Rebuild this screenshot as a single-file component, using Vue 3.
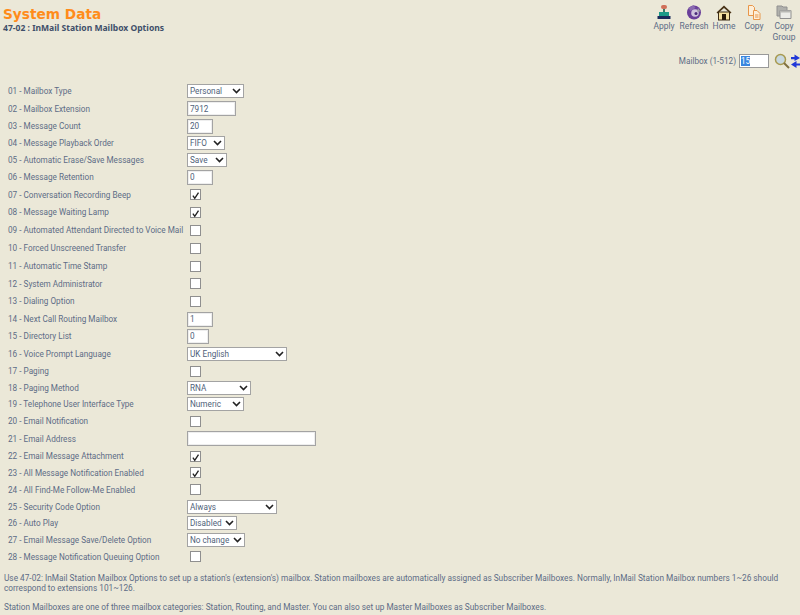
<script setup>
const rows = [
  { n: '01 - Mailbox Type', h: 17, t: 's', v: 'Personal', w: 57 },
  { n: '02 - Mailbox Extension', h: 17.5, t: 'i', v: '7912', w: 49 },
  { n: '03 - Message Count', h: 17.5, t: 'i', v: '20', w: 26 },
  { n: '04 - Message Playback Order', h: 17, t: 's', v: 'FIFO', w: 38 },
  { n: '05 - Automatic Erase/Save Messages', h: 17, t: 's', v: 'Save', w: 40 },
  { n: '06 - Message Retention', h: 17, t: 'i', v: '0', w: 26 },
  { n: '07 - Conversation Recording Beep', h: 17.5, t: 'c', v: true },
  { n: '08 - Message Waiting Lamp', h: 18, t: 'c', v: true },
  { n: '09 - Automated Attendant Directed to Voice Mail', h: 18, t: 'c' },
  { n: '10 - Forced Unscreened Transfer', h: 18, t: 'c' },
  { n: '11 - Automatic Time Stamp', h: 17.5, t: 'c' },
  { n: '12 - System Administrator', h: 17.5, t: 'c' },
  { n: '13 - Dialing Option', h: 18, t: 'c' },
  { n: '14 - Next Call Routing Mailbox', h: 17.5, t: 'i', v: '1', w: 26 },
  { n: '15 - Directory List', h: 17.25, t: 'i', v: '0', w: 22 },
  { n: '16 - Voice Prompt Language', h: 17.5, t: 's', v: 'UK English', w: 100 },
  { n: '17 - Paging', h: 17, t: 'c' },
  { n: '18 - Paging Method', h: 16.25, t: 's', v: 'RNA', w: 64 },
  { n: '19 - Telephone User Interface Type', h: 16.75, t: 's', v: 'Numeric', w: 57 },
  { n: '20 - Email Notification', h: 17.5, t: 'c' },
  { n: '21 - Email Address', h: 17.75, t: 'i', v: '', w: 129 },
  { n: '22 - Email Message Attachment', h: 16.75, t: 'c', v: true },
  { n: '23 - All Message Notification Enabled', h: 16.5, t: 'c', v: true },
  { n: '24 - All Find-Me Follow-Me Enabled', h: 17.5, t: 'c' },
  { n: '25 - Security Code Option', h: 16.75, t: 's', v: 'Always', w: 90 },
  { n: '26 - Auto Play', h: 16.25, t: 's', v: 'Disabled', w: 50 },
  { n: '27 - Email Message Save/Delete Option', h: 16.5, t: 's', v: 'No change', w: 58 },
  { n: '28 - Message Notification Queuing Option', h: 17, t: 'c' },
]
</script>

<template>
  <div class="page">
    <header class="top">
      <div>
        <h1 class="title">System Data</h1>
        <h2 class="sub">47-02 : InMail Station Mailbox Options</h2>
      </div>
      <nav class="tools">
        <div class="tool">
          <svg width="18" height="18" viewBox="0 0 18 18"><rect x="6" y="2" width="6" height="4" rx="2" fill="#d0705a"/><rect x="8" y="6" width="2" height="4" fill="#3a7a6a"/><rect x="4" y="9" width="10" height="4" fill="#1c9a88"/><rect x="2.500" y="13" width="13" height="3" fill="#1a2a5a"/></svg>
          <span>Apply</span>
        </div>
        <div class="tool">
          <svg width="18" height="18" viewBox="0 0 18 18"><circle cx="9" cy="9.500" r="7" fill="#6a3f9a"/><path d="M3.500 5l5-3 2 3-5 3z" fill="#8a6ab0"/><circle cx="10" cy="10" r="3.800" fill="#cfc4dc"/><circle cx="11" cy="10.500" r="1.500" fill="#4a2a7a"/><path d="M13 5l2.500 3.500-3.500 0z" fill="#a0a0a8"/></svg>
          <span>Refresh</span>
        </div>
        <div class="tool">
          <svg width="18" height="18" viewBox="0 0 18 18"><path d="M1.500 9.500L9 2.500l7.500 7-1.200 1L9 5 2.700 10.500z" fill="#4a3418"/><rect x="3.500" y="9" width="11" height="8" fill="#f6e0a0" stroke="#3a2a14"/><rect x="7" y="11" width="4" height="6" fill="#2a1a08"/></svg>
          <span>Home</span>
        </div>
        <div class="tool">
          <svg width="18" height="18" viewBox="0 0 18 18"><path d="M3.500 2.500h4l2 2v8h-6z" fill="#fdeed8" stroke="#e8964a"/><path d="M8.500 7.500h3.500l3 3v6H8.500z" fill="#fdeed8" stroke="#e8964a"/><path d="M10 12h3.500M10 14h3.500" stroke="#e8964a"/></svg>
          <span>Copy</span>
        </div>
        <div class="tool">
          <svg width="18" height="18" viewBox="0 0 18 18"><path d="M2 3h5l1 1h4v9H2z" fill="#b0b0ac" stroke="#909090"/><path d="M5 7.500h11v8H5z" fill="#ecece8" stroke="#909090"/><path d="M5 7.500h11v2H5z" fill="#b8b8b4"/></svg>
          <span>Copy<br>Group</span>
        </div>
      </nav>
    </header>

    <div class="mailbox">
      <span>Mailbox (1-512)</span>
      <span class="mbinput"><span class="sel">15</span></span>
      <svg class="lens" width="16" height="16" viewBox="0 0 16 16"><circle cx="6.500" cy="6.500" r="5" fill="#c8d8e0" stroke="#a89a50" stroke-width="1.500"/><path d="M10 10l5 5" stroke="#807040" stroke-width="2"/></svg>
      <svg class="arrows" width="9" height="16" viewBox="0 0 9 16"><path d="M0 4h3.500V1.500L9 5 3.500 8V6.200H0z" fill="#2038d8"/><path d="M9 10.500H5.500V8L0 11.500 5.500 15v-2.500H9z" fill="#2038d8"/></svg>
    </div>

    <main class="form">
      <div v-for="r in rows" :key="r.n" class="row" :style="{ height: r.h + 'px' }">
        <label class="lbl">{{ r.n }}</label>
        <span v-if="r.t === 's'" class="select" :style="{ width: r.w + 'px' }">
          <span>{{ r.v }}</span>
          <svg width="9" height="6" viewBox="0 0 9 6"><path d="M1 1l3.500 3.500L8 1" fill="none" stroke="#222" stroke-width="1.600"/></svg>
        </span>
        <span v-else-if="r.t === 'i'" class="input" :style="{ width: r.w + 'px' }">{{ r.v }}</span>
        <span v-else class="check">
          <svg v-if="r.v" width="12" height="12" viewBox="0 0 12 12"><path d="M2.500 5.500l2.500 3.500L10 1.500" fill="none" stroke="#222" stroke-width="1.800"/></svg>
        </span>
      </div>
    </main>

    <footer class="notes">
      <p>Use 47-02: InMail Station Mailbox Options to set up a station's (extension's) mailbox. Station mailboxes are automatically assigned as Subscriber Mailboxes. Normally, InMail Station Mailbox numbers 1~26 should<br>correspond to extensions 101~126.</p>
      <p>Station Mailboxes are one of three mailbox categories: Station, Routing, and Master. You can also set up Master Mailboxes as Subscriber Mailboxes.</p>
    </footer>
  </div>
</template>

<style>
html, body { margin: 0; background: #ebe8d8; }
</style>

<style scoped>
.page {
  width: 800px;
  height: 615px;
  overflow: hidden;
  background: #ebe8d8;
  color: #5d6c86;
  font-family: Roboto, "Noto Sans", sans-serif;
  font-size: 8.200px;
}
.top { display: flex; justify-content: space-between; height: 47px; }
.title {
  margin: 6px 0 0 3px;
  font: bold 13.700px/17px "DejaVu Sans", sans-serif;
  color: #ff8c1a;
}
.sub {
  margin: 0 0 0 3px;
  font: bold 8.550px/10px "Noto Sans", sans-serif;
  color: #3f4f6a;
}
.tools { display: flex; padding: 3px 1px 0 0; }
.tool {
  width: 30px;
  display: flex;
  flex-direction: column;
  align-items: center;
  text-align: center;
  line-height: 11px;
  font-size: 8.500px;
}
.mailbox {
  display: flex;
  align-items: center;
  justify-content: flex-end;
  height: 18px;
  margin-top: 5px;
}
.mbinput {
  box-sizing: border-box;
  width: 30px;
  height: 14px;
  margin-left: 3px;
  padding: 1px;
  border: 1px solid #999;
  background: #fff;
  display: block;
  line-height: 10px;
}
.sel { background: #3a86e0; color: #fff; display: inline-block; }
.lens { margin-left: 5px; }
.arrows { margin-left: 1px; }
.form { margin-top: 12.800px; padding-left: 8px; }
.row { display: flex; align-items: center; }
.lbl { width: 179px; flex: none; white-space: nowrap; }
.select, .input {
  box-sizing: border-box;
  height: 14px;
  border: 1px solid #a3a3a3;
  background: #fff;
  display: flex;
  align-items: center;
  padding: 0 2px;
  white-space: nowrap;
}
.select { justify-content: space-between; color: #4f5f79; }
.input { height: 15px; color: #4f5f79; box-shadow: inset 0 0 0 1px #eee; }
.check {
  box-sizing: border-box;
  width: 11px;
  height: 11px;
  margin-left: 3px;
  border: 1px solid #8f8f8f;
  background: #fff;
  display: flex;
}
.notes { padding: 0 4px; margin-top: 8.200px; font-size: 8.270px; }
.notes p { margin: 0 0 9px; line-height: 10px; white-space: nowrap; }
</style>
